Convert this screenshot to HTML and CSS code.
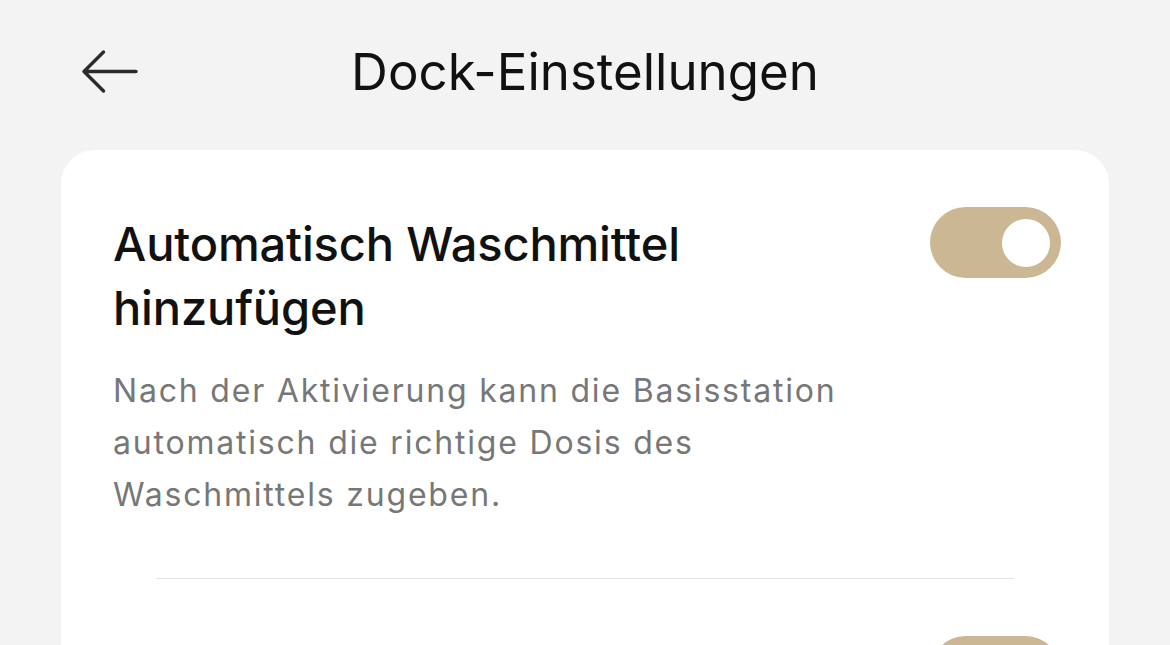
FILE: index.html
```html
<!DOCTYPE html>
<html lang="de">

<head>
    <meta charset="UTF-8">
    <meta name="viewport" content="width=device-width, initial-scale=1.0">
    <title>Dock-Einstellungen</title>
    <link rel="stylesheet" href="styles.css">
</head>

<body>
    <div class="topbar">
        <a href="#" class="back-button" aria-label="Zurück">
            <svg width="60" height="46" viewBox="0 0 60 46">
                <path d="M56 22.5H4M23.5 3L4 22.5L23.5 42" fill="none" stroke="#2b2b2b" stroke-width="3.4" stroke-linecap="round" stroke-linejoin="round" />
            </svg>
        </a>
        <h1>Dock-Einstellungen</h1>
    </div>

    <div class="card">
        <div class="setting">
            <div class="setting-info">
                <h3>Automatisch Waschmittel hinzufügen</h3>
                <p>Nach der Aktivierung kann die Basisstation automatisch die richtige Dosis des Waschmittels zugeben.</p>
            </div>
            <div class="switch on"><span class="knob"></span></div>
        </div>
        <div class="divider"></div>
        <div class="setting">
            <div class="setting-info">
                <!-- next option, below the fold -->
            </div>
            <div class="switch on"><span class="knob"></span></div>
        </div>
    </div>
</body>

</html>
```
FILE: styles.css
```css
/* Dock settings page */
body {
    font-family: Inter, "Noto Sans", Arial, sans-serif;
    margin: 0;
    padding: 0;
    background-color: #f3f3f3;
    overflow: hidden;
}

.topbar {
    position: relative;
    height: 150px;
    display: flex;
    align-items: center;
    justify-content: center;
}

.topbar h1 {
    margin: 0 0 7px 0;
    font-size: 51px;
    font-weight: 400;
    color: #111;
    letter-spacing: 0;
}

.back-button {
    position: absolute;
    left: 80px;
    top: 49px;
    display: block;
    line-height: 0;
}

.card {
    margin: 0 61px;
    background-color: #fff;
    border-radius: 34px;
    padding: 0 48px 60px 52px;
}

.setting {
    display: flex;
    align-items: flex-start;
    justify-content: space-between;
    padding-top: 62px;
    gap: 40px;
}

.setting-info {
    flex: 1;
}

.setting-info h3 {
    margin: 0;
    font-size: 47px;
    font-weight: 500;
    line-height: 64px;
    color: #111;
    letter-spacing: -0.15px;
}

.setting-info p {
    margin: 25px 0 0 0;
    font-size: 32px;
    line-height: 52px;
    color: #777;
    letter-spacing: 1.8px;
}

.switch {
    flex-shrink: 0;
    width: 131px;
    height: 71px;
    margin-top: -5px;
    border-radius: 36px;
    background-color: #cbb794;
    position: relative;
}

.switch .knob {
    position: absolute;
    right: 11px;
    top: 11.5px;
    width: 48px;
    height: 48px;
    border-radius: 50%;
    background-color: #fff;
}

.divider {
    height: 1px;
    background-color: #e2e2e2;
    margin: 57px 47px 0 43px;
}
```
